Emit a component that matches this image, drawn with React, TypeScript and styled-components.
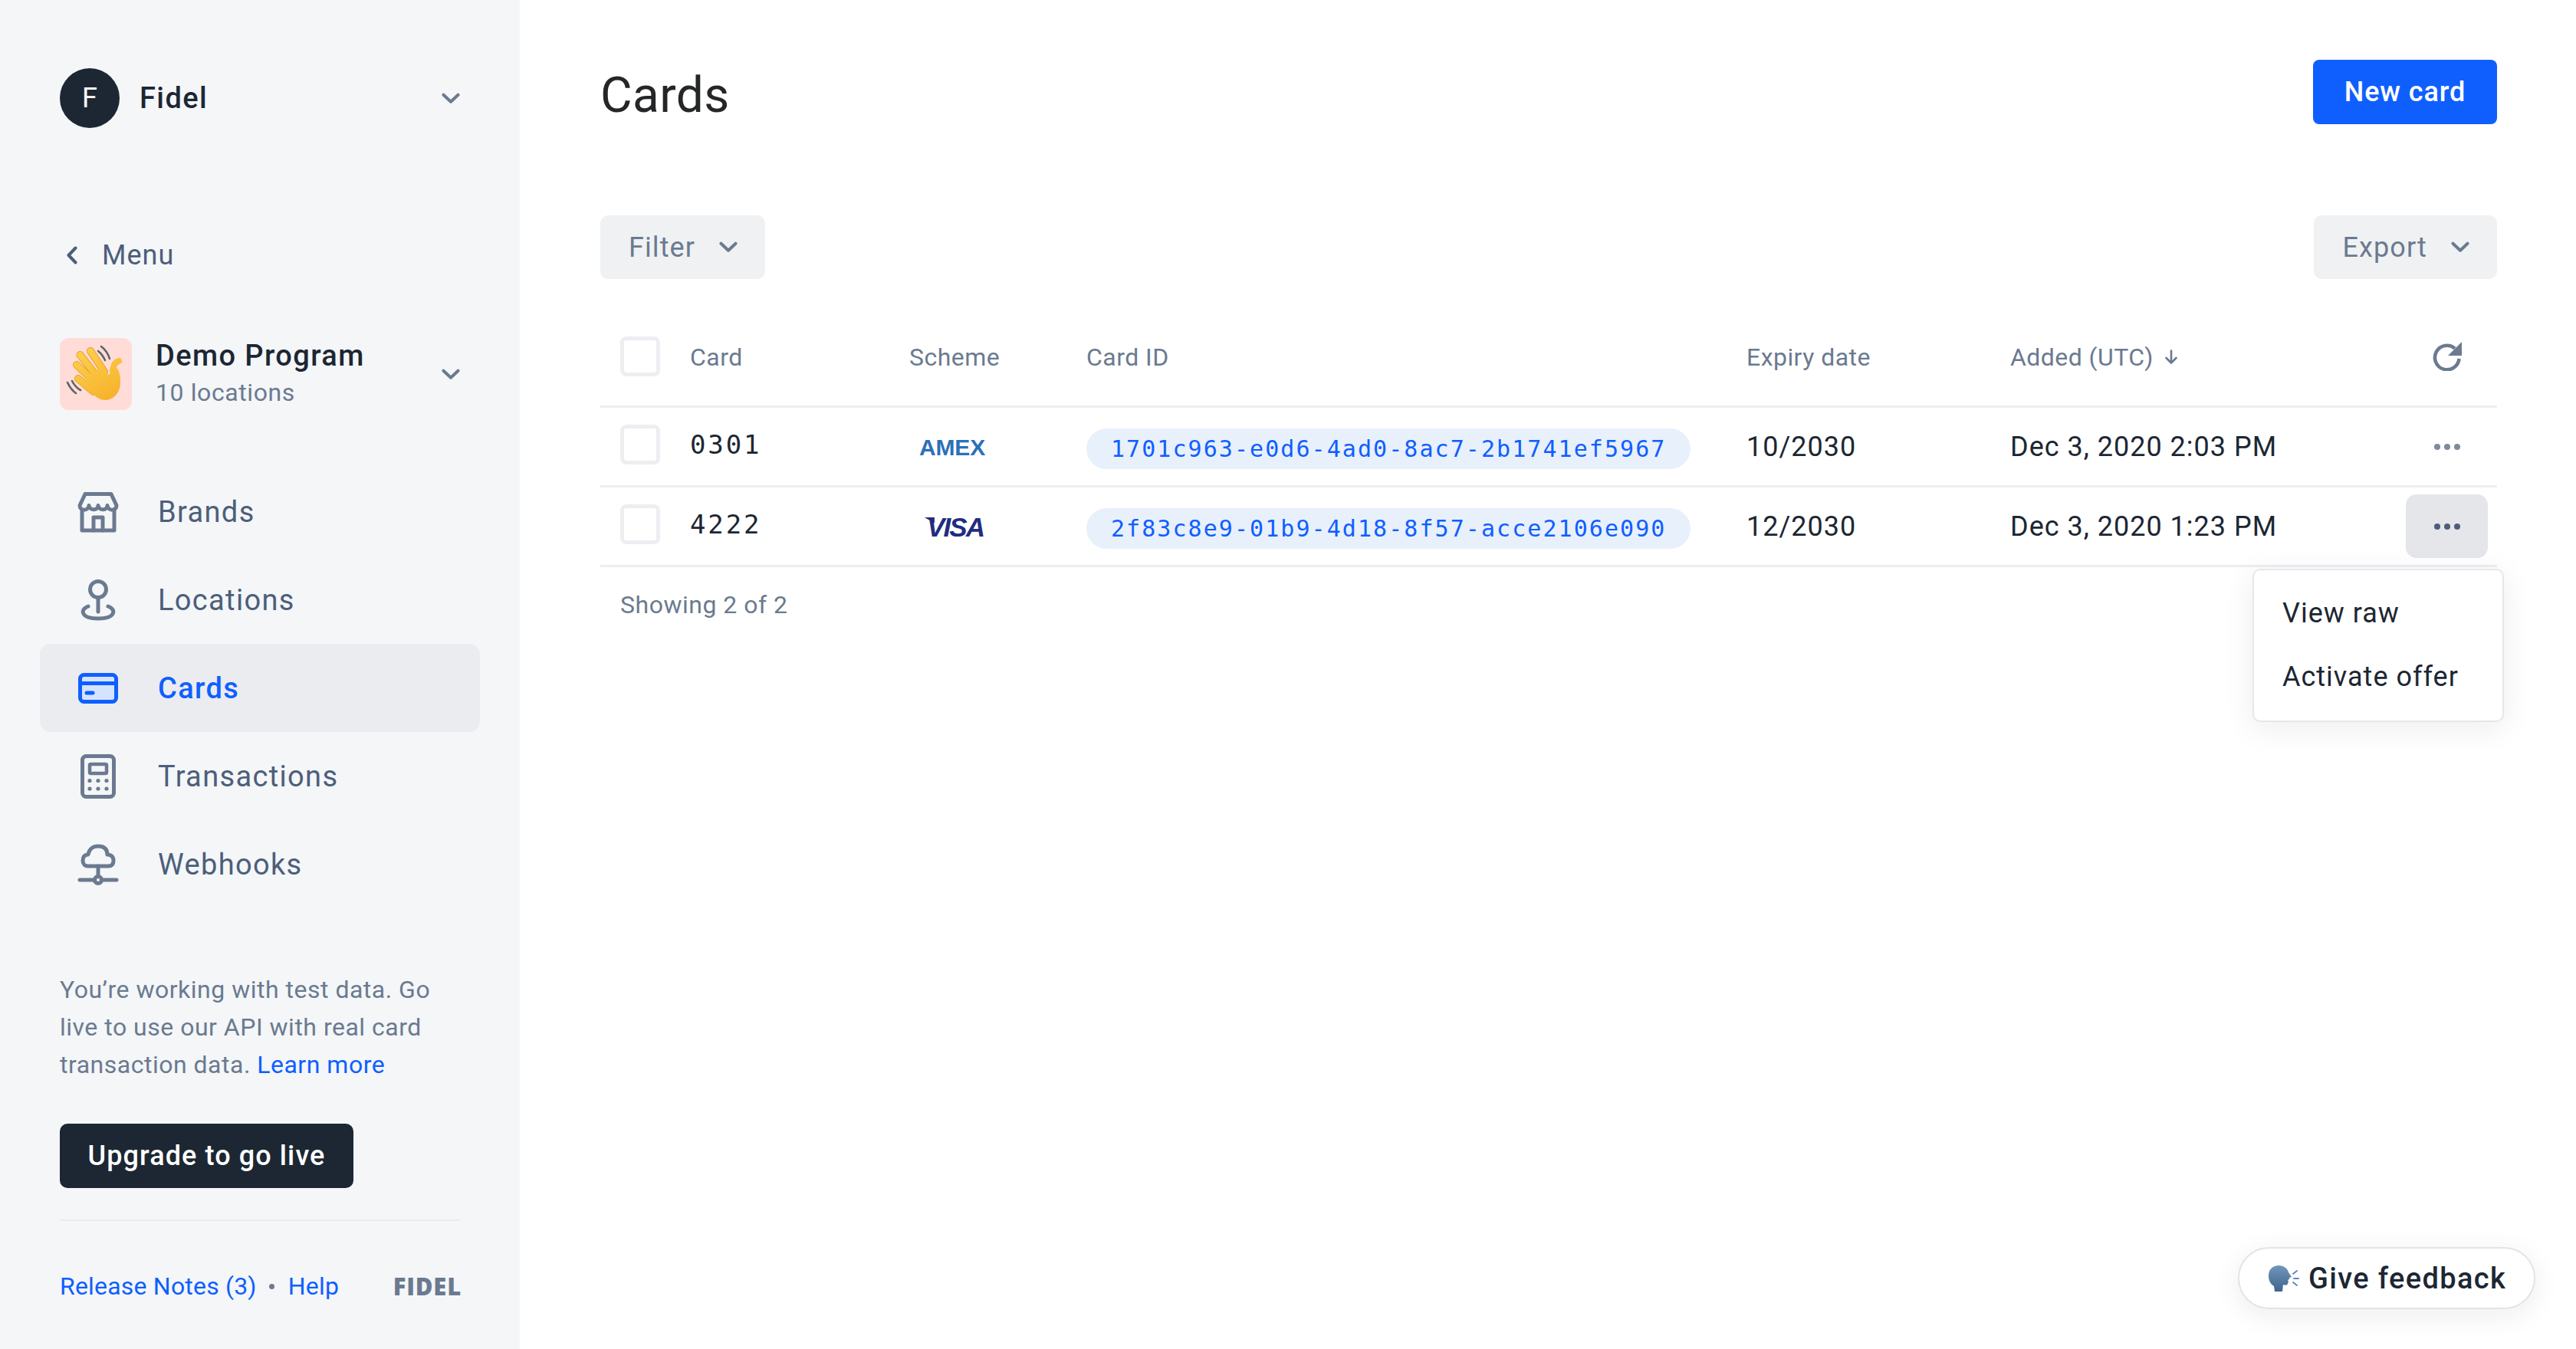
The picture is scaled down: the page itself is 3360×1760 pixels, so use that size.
import React from "react";
import styled, { createGlobalStyle } from "styled-components";

const ink = "#1c2733";
const slate = "#4d5e7a";
const muted = "#6b7a90";
const blue = "#0f5fff";
const line = "#eceef1";

const Global = createGlobalStyle`
  html, body { margin: 0; padding: 0; background: #fff; }
  body { font-family: Roboto, "Liberation Sans", sans-serif; color: ${ink}; }
  * { box-sizing: border-box; }
`;

const Page = styled.div`
  position: relative;
  display: flex;
  width: 3360px;
  height: 1760px;
  overflow: hidden;
`;

const Sidebar = styled.aside`
  width: 678px;
  flex: none;
  height: 100%;
  background: #f4f6f8;
  padding: 89px 0 0 0;
  display: flex;
  flex-direction: column;
`;

const AccountRow = styled.div`
  display: flex;
  align-items: center;
  height: 78px;
  margin: 0 78px 0 78px;
`;

const Avatar = styled.div`
  width: 78px;
  height: 78px;
  border-radius: 50%;
  background: ${ink};
  color: #fff;
  font-size: 36px;
  display: flex;
  align-items: center;
  justify-content: center;
`;

const AccountName = styled.div`
  margin-left: 26px;
  font-size: 38px;
  font-weight: 500;
  letter-spacing: 1.4px;
  flex: 1;
`;

const BackRow = styled.div`
  display: flex;
  align-items: center;
  height: 40px;
  margin: 146px 0 0 87px;
  font-size: 36px;
  color: ${slate};
  letter-spacing: 1px;
  gap: 32px;
`;

const ProgramRow = styled.div`
  display: flex;
  align-items: center;
  height: 94px;
  margin: 88px 78px 0 78px;
`;

const ProgramIcon = styled.div`
  width: 94px;
  height: 94px;
  border-radius: 12px;
  background: #ffdcd8;
  flex: none;
`;

const ProgramText = styled.div`
  margin-left: 31px;
  flex: 1;
`;

const ProgramName = styled.div`
  font-size: 38px;
  font-weight: 500;
  letter-spacing: 1.4px;
  line-height: 48px;
  margin-top: -4px;
`;

const ProgramSub = styled.div`
  font-size: 32px;
  color: ${muted};
  letter-spacing: 0.6px;
  line-height: 42px;
  margin-top: 3px;
`;

const Nav = styled.nav`
  margin: 75px 52px 0 52px;
  display: flex;
  flex-direction: column;
`;

const NavItem = styled.div<{ $active?: boolean }>`
  display: flex;
  align-items: center;
  height: 115px;
  padding-left: 46px;
  gap: 48px;
  border-radius: 14px;
  font-size: 38px;
  letter-spacing: 1.35px;
  font-weight: ${(p) => (p.$active ? 500 : 400)};
  color: ${(p) => (p.$active ? blue : slate)};
  background: ${(p) => (p.$active ? "#ebecf0" : "transparent")};
`;

const Note = styled.p`
  margin: 82px 60px 0 78px;
  font-size: 32px;
  line-height: 49px;
  letter-spacing: 0.5px;
  color: ${muted};
`;

const TextLink = styled.a`
  color: ${blue};
`;

const UpgradeButton = styled.div`
  margin: 52px 0 0 78px;
  width: 383px;
  height: 84px;
  background: ${ink};
  border-radius: 10px;
  color: #fff;
  font-size: 36px;
  font-weight: 500;
  letter-spacing: 1.1px;
  display: flex;
  align-items: center;
  justify-content: center;
`;

const SideDivider = styled.div`
  margin: 41px 78px 0 78px;
  height: 2px;
  background: #e9ebee;
`;

const SideFooter = styled.div`
  margin: 65px 76px 0 78px;
  height: 40px;
  display: flex;
  align-items: center;
  font-size: 32px;
  letter-spacing: 0.2px;
  color: ${blue};
`;

const Bullet = styled.span`
  width: 7px;
  height: 7px;
  border-radius: 50%;
  background: ${muted};
  margin: 0 18px 0 16px;
`;

const Wordmark = styled.span`
  margin-left: auto;
  font-size: 31px;
  font-weight: 800;
  letter-spacing: 0.8px;
  color: ${muted};
  font-family: "Open Sans", Roboto, sans-serif;
`;

const Main = styled.main`
  flex: 1;
  padding: 78px 103px 0 105px;
  position: relative;
`;

const TitleRow = styled.div`
  display: flex;
  align-items: center;
  justify-content: space-between;
  height: 84px;
`;

const Title = styled.h1`
  margin: 9px 0 0 0;
  font-size: 64px;
  font-weight: 400;
  color: #242628;
  letter-spacing: 0.4px;
`;

const PrimaryButton = styled.div`
  width: 240px;
  height: 84px;
  border-radius: 8px;
  background: ${blue};
  color: #fff;
  font-size: 36px;
  font-weight: 500;
  letter-spacing: 0.9px;
  display: flex;
  align-items: center;
  justify-content: center;
`;

const Toolbar = styled.div`
  margin-top: 119px;
  display: flex;
  justify-content: space-between;
`;

const GhostButton = styled.div`
  height: 83px;
  padding: 0 36px 0 37px;
  gap: 31px;
  border-radius: 10px;
  background: #f0f1f3;
  color: ${muted};
  font-size: 36px;
  letter-spacing: 1.1px;
  display: flex;
  align-items: center;
`;

const Table = styled.div`
  margin-top: 36px;
`;

const Row = styled.div<{ $head?: boolean }>`
  display: grid;
  grid-template-columns: 117px 286px 231px 861px 344px 1fr 119px;
  align-items: center;
  height: ${(p) => (p.$head ? "132px" : "104px")};
  border-bottom: 3px solid ${line};
  font-size: ${(p) => (p.$head ? "32px" : "36px")};
  color: ${(p) => (p.$head ? muted : ink)};
  letter-spacing: ${(p) => (p.$head ? "0.45px" : "1px")};
`;

const HeadCell = styled.div`
  margin-top: 3px;
`;

const Check = styled.div<{ $head?: boolean }>`
  width: 52px;
  height: 52px;
  margin: 0 0 ${(p) => (p.$head ? "0" : "6px")} 26px;
  border: 5px solid ${line};
  border-radius: 8px;
  background: #fff;
`;

const CardNumber = styled.div`
  font-family: "DejaVu Sans Mono", "Liberation Mono", monospace;
  font-size: 34px;
  letter-spacing: 2.9px;
  margin-bottom: 6px;
`;

const SchemeCell = styled.div`
  width: 116px;
  display: flex;
  justify-content: center;
  align-items: center;
  margin-left: -2px;
  padding-top: 2px;
`;

const Amex = styled.span`
  font-family: "Liberation Sans", sans-serif;
  font-weight: 700;
  font-size: 30px;
  letter-spacing: -0.2px;
  color: #2c70b9;
`;

const Visa = styled.span`
  position: relative;
  font-family: "Liberation Sans", sans-serif;
  font-weight: 700;
  font-style: italic;
  font-size: 35px;
  letter-spacing: -1.9px;
  color: #1f2d80;
  margin-left: 8px;

  &::before {
    content: "";
    position: absolute;
    left: -4px;
    top: 7px;
    width: 14px;
    height: 8px;
    background: #1f2d80;
    clip-path: polygon(0 0, 100% 0, 100% 100%);
  }
`;

const IdPill = styled.div`
  justify-self: start;
  width: 788px;
  height: 53px;
  margin-top: 6px;
  border-radius: 27px;
  background: #e8f0fb;
  color: ${blue};
  font-family: "DejaVu Sans Mono", "Liberation Mono", monospace;
  font-size: 30px;
  letter-spacing: 2.06px;
  display: flex;
  align-items: center;
  padding-left: 32px;
`;

const Sortable = styled.div`
  display: flex;
  align-items: center;
  gap: 14px;
  margin-top: 3px;
`;

const ActionCell = styled.div`
  display: flex;
  justify-content: center;
  width: 107px;
`;

const MoreButton = styled.div<{ $open?: boolean }>`
  width: 107px;
  height: 83px;
  border-radius: 14px;
  display: flex;
  align-items: center;
  justify-content: center;
  gap: 5px;
  background: ${(p) => (p.$open ? "#e5e6ea" : "transparent")};
  color: ${(p) => (p.$open ? slate : "#7f8a9c")};
`;

const Dot = styled.span`
  width: 8px;
  height: 8px;
  border-radius: 50%;
  background: currentColor;
`;

const Showing = styled.div`
  margin: 30px 0 0 26px;
  font-size: 32px;
  letter-spacing: 0.5px;
  color: ${muted};
`;

const Dropdown = styled.div`
  position: absolute;
  left: 2260px;
  top: 742px;
  width: 328px;
  height: 200px;
  padding: 14px 0 0 37px;
  background: #fff;
  border: 2px solid #e6e7ea;
  border-radius: 10px;
  box-shadow: 0 8px 40px rgba(20, 30, 50, 0.08);
`;

const DropdownItem = styled.div`
  height: 83px;
  display: flex;
  align-items: center;
  font-size: 36px;
  letter-spacing: 1px;
  color: ${ink};
`;

const Feedback = styled.div`
  position: absolute;
  left: 2241px;
  top: 1627px;
  width: 388px;
  height: 81px;
  border-radius: 41px;
  border: 2px solid #e4e4e6;
  background: #fff;
  box-shadow: 0 8px 36px rgba(20, 30, 50, 0.08);
  display: flex;
  align-items: center;
  padding-left: 38px;
  gap: 12px;
  font-size: 38px;
  font-weight: 500;
  letter-spacing: 1.35px;
  color: ${ink};
`;

const Chevron = ({ dir = "down", color = muted, w = 24 }: { dir?: "down" | "left"; color?: string; w?: number }) =>
  dir === "down" ? (
    <svg width={w} height={w * 0.6} viewBox="0 0 24 14" fill="none">
      <path d="M2.5 2.5 12 11.5 21.5 2.5" stroke={color} strokeWidth="4" strokeLinecap="round" strokeLinejoin="round" />
    </svg>
  ) : (
    <svg width="14" height="24" viewBox="0 0 14 24" fill="none">
      <path d="M11.5 2.5 2.5 12 11.5 21.5" stroke={color} strokeWidth="4" strokeLinecap="round" strokeLinejoin="round" />
    </svg>
  );

const StoreIcon = () => (
  <svg width="60" height="60" viewBox="0 0 60 60" fill="none" stroke={muted} strokeWidth="5" strokeLinejoin="round" strokeLinecap="round">
    <path d="M13 6.5h34l7 15c0 7-11 8-12 0 0 7-11 7-12 0 0 7-11 7-12 0-1 8-12 7-12 0z" />
    <path d="M9 27v27h42V27" />
    <path d="M24 54V37h12v17" />
  </svg>
);

const PinIcon = () => (
  <svg width="60" height="60" viewBox="0 0 60 60" fill="none" stroke={muted} strokeWidth="5" strokeLinecap="round">
    <circle cx="30" cy="16" r="10.5" />
    <path d="M30 27v18" />
    <path d="M17 38C6 42 7 54 30 54s24-12 13-16" />
  </svg>
);

const CardIcon = () => (
  <svg width="60" height="60" viewBox="0 0 60 60" fill="none">
    <rect x="6.5" y="12.5" width="47" height="35" rx="5" fill="#d4e4ff" stroke={blue} strokeWidth="5" />
    <path d="M6.5 23.5h47" stroke={blue} strokeWidth="5" />
    <path d="M15 36h8" stroke={blue} strokeWidth="5" strokeLinecap="round" />
  </svg>
);

const CalcIcon = () => (
  <svg width="60" height="60" viewBox="0 0 60 60" fill="none" stroke={muted}>
    <rect x="9.5" y="3.5" width="41" height="53" rx="5" strokeWidth="5" />
    <rect x="19" y="14" width="22" height="12" rx="1.5" strokeWidth="4.5" />
    <g fill={muted} stroke="none">
      <circle cx="19" cy="35.5" r="2.6" />
      <circle cx="30" cy="35.5" r="2.6" />
      <circle cx="41" cy="35.5" r="2.6" />
      <circle cx="19" cy="46" r="2.6" />
      <circle cx="30" cy="46" r="2.6" />
      <circle cx="41" cy="46" r="2.6" />
    </g>
  </svg>
);

const CloudIcon = () => (
  <svg width="60" height="60" viewBox="0 0 60 60" fill="none" stroke={muted} strokeWidth="5" strokeLinecap="round" strokeLinejoin="round">
    <path d="M17 32h26c6 0 7-4 7-7 0-5-3-8-8-8 0-8-5-11-12-11s-12 4-13 11c-5 0-7 3-7 8 0 3 2 7 7 7z" />
    <path d="M30 32v13" />
    <path d="M6 50h48" />
    <circle cx="30" cy="50" r="4.5" fill="#f4f6f8" />
  </svg>
);

const RefreshIcon = () => (
  <svg width="38" height="38" viewBox="0 0 38 38" fill="none">
    <path d="M29 8.5A15.8 15.8 0 1 0 34.5 22" stroke={muted} strokeWidth="4.6" strokeLinecap="butt" />
    <path d="M38 0v18H20z" fill={muted} />
  </svg>
);

const SortIcon = () => (
  <svg width="18" height="20" viewBox="0 0 18 20" fill="none">
    <path d="M9 1.5v16M2.5 11 9 17.5 15.5 11" stroke={muted} strokeWidth="2.6" strokeLinecap="round" strokeLinejoin="round" />
  </svg>
);

const fingers = ["M40 17 58 44", "M26.5 22 50 52", "M22 35 46 58", "M24 53 44 70"];

const HandIcon = () => (
  <svg width="94" height="94" viewBox="0 0 94 94" fill="none">
    <defs>
      <linearGradient id="hand" gradientUnits="userSpaceOnUse" x1="25" y1="15" x2="70" y2="85">
        <stop offset="0" stopColor="#fdcf4f" />
        <stop offset="1" stopColor="#f6b028" />
      </linearGradient>
    </defs>
    <g stroke="#5f6366" strokeWidth="2.6" strokeLinecap="round">
      <path d="M54 11q8 6 11 16" />
      <path d="M50 17q6 5 9 12" />
      <path d="M10 58q4 9 11 14" />
      <path d="M16 56q4 8 11 12" />
    </g>
    <g stroke="#e39c1e" strokeWidth="10" strokeLinecap="round">
      {fingers.map((d) => (
        <path key={d} d={d} />
      ))}
    </g>
    <g stroke="url(#hand)" strokeWidth="8.4" strokeLinecap="round">
      {fingers.map((d) => (
        <path key={d} d={d} />
      ))}
      <path d="M77 30q-6 1-8 12" strokeWidth="8" />
    </g>
    <path d="M50 40l14 8c2-3 4-8 8-10 6 2 7 12 7 20 0 12-8 23-20 23-7 0-14-5-19-11l-6-16z" fill="url(#hand)" />
  </svg>
);

const SpeakIcon = () => (
  <svg width="40" height="34" viewBox="0 0 40 34" fill="none">
    <defs>
      <linearGradient id="head" x1="0" y1="0" x2="0" y2="1">
        <stop offset="0" stopColor="#7297bb" />
        <stop offset="1" stopColor="#3f648e" />
      </linearGradient>
    </defs>
    <path d="M13 0c7 0 12 4 13 9l4 6-3 1v2l-2 1 1 2-1 3c-1 2-3 2-6 1l-1 9H8l-1-7C2 24 0 19 0 13 0 5 6 0 13 0z" fill="url(#head)" />
    <g stroke="#5b8ab8" strokeWidth="2" strokeLinecap="round">
      <path d="M32 11l5-4" />
      <path d="M33 17h6" />
      <path d="M32 22l5 4" />
    </g>
  </svg>
);

const navItems = [
  { label: "Brands", icon: <StoreIcon /> },
  { label: "Locations", icon: <PinIcon /> },
  { label: "Cards", icon: <CardIcon />, active: true },
  { label: "Transactions", icon: <CalcIcon /> },
  { label: "Webhooks", icon: <CloudIcon /> },
];

const rows = [
  { num: "0301", scheme: <Amex>AMEX</Amex>, id: "1701c963-e0d6-4ad0-8ac7-2b1741ef5967", exp: "10/2030", added: "Dec 3, 2020 2:03 PM" },
  { num: "4222", scheme: <Visa>VISA</Visa>, id: "2f83c8e9-01b9-4d18-8f57-acce2106e090", exp: "12/2030", added: "Dec 3, 2020 1:23 PM", open: true },
];

export default function App() {
  return (
    <Page>
      <Global />
      <Sidebar>
        <AccountRow>
          <Avatar>F</Avatar>
          <AccountName>Fidel</AccountName>
          <Chevron />
        </AccountRow>
        <BackRow>
          <Chevron dir="left" color={slate} />
          Menu
        </BackRow>
        <ProgramRow>
          <ProgramIcon>
            <HandIcon />
          </ProgramIcon>
          <ProgramText>
            <ProgramName>Demo Program</ProgramName>
            <ProgramSub>10 locations</ProgramSub>
          </ProgramText>
          <Chevron />
        </ProgramRow>
        <Nav>
          {navItems.map((n) => (
            <NavItem key={n.label} $active={n.active}>
              {n.icon}
              {n.label}
            </NavItem>
          ))}
        </Nav>
        <Note>
          You’re working with test data. Go live to use our API with real card transaction data.{" "}
          <TextLink>Learn more</TextLink>
        </Note>
        <UpgradeButton>Upgrade to go live</UpgradeButton>
        <SideDivider />
        <SideFooter>
          Release Notes (3)
          <Bullet />
          Help
          <Wordmark>FIDEL</Wordmark>
        </SideFooter>
      </Sidebar>
      <Main>
        <TitleRow>
          <Title>Cards</Title>
          <PrimaryButton>New card</PrimaryButton>
        </TitleRow>
        <Toolbar>
          <GhostButton>
            Filter
            <Chevron />
          </GhostButton>
          <GhostButton>
            Export
            <Chevron />
          </GhostButton>
        </Toolbar>
        <Table>
          <Row $head>
            <Check $head />
            <HeadCell>Card</HeadCell>
            <HeadCell>Scheme</HeadCell>
            <HeadCell>Card ID</HeadCell>
            <HeadCell>Expiry date</HeadCell>
            <Sortable>
              Added (UTC)
              <SortIcon />
            </Sortable>
            <ActionCell>
              <RefreshIcon />
            </ActionCell>
          </Row>
          {rows.map((r) => (
            <Row key={r.num}>
              <Check />
              <CardNumber>{r.num}</CardNumber>
              <SchemeCell>{r.scheme}</SchemeCell>
              <IdPill>{r.id}</IdPill>
              <div>{r.exp}</div>
              <div>{r.added}</div>
              <ActionCell>
                <MoreButton $open={r.open}>
                  <Dot />
                  <Dot />
                  <Dot />
                </MoreButton>
              </ActionCell>
            </Row>
          ))}
        </Table>
        <Showing>Showing 2 of 2</Showing>
        <Dropdown>
          <DropdownItem>View raw</DropdownItem>
          <DropdownItem>Activate offer</DropdownItem>
        </Dropdown>
        <Feedback>
          <SpeakIcon />
          Give feedback
        </Feedback>
      </Main>
    </Page>
  );
}
